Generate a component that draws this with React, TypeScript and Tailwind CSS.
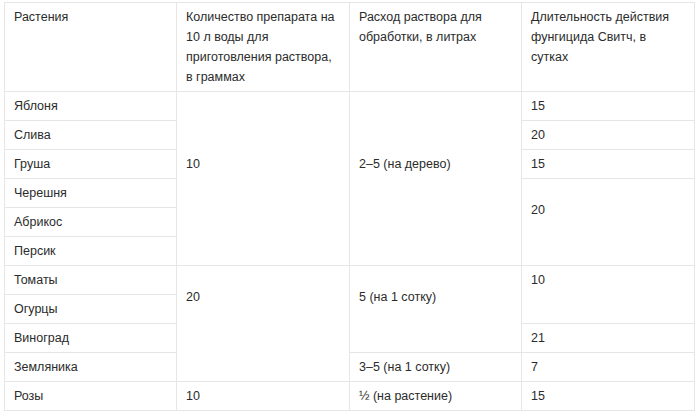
import React from "react"

type CellProps = {
  children?: React.ReactNode
  rowSpan?: number
  className?: string
}

function Td({ children, rowSpan, className = "" }: CellProps) {
  return (
    <td
      rowSpan={rowSpan}
      className={`border border-[#e6e6e6] px-[9px] py-1 align-top leading-5 ${className}`}
    >
      {children}
    </td>
  )
}

export default function App() {
  return (
    <div
      className="min-h-[418px] w-[700px] bg-white pl-[4px] pt-[2px] text-[12.5px] text-[#2b2b2b]"
      style={{ fontFamily: '"Liberation Sans", Arial, sans-serif' }}
    >
      <table className="w-[690px] table-fixed border-collapse">
        <colgroup>
          <col className="w-[172px]" />
          <col className="w-[173px]" />
          <col className="w-[172px]" />
          <col className="w-[173px]" />
        </colgroup>
        <tbody>
          <tr>
            <Td>Растения</Td>
            <Td>Количество препарата на 10 л воды для приготовления раствора, в граммах</Td>
            <Td>Расход раствора для обработки, в литрах</Td>
            <Td>Длительность действия фунгицида Свитч, в сутках</Td>
          </tr>
          <tr>
            <Td>Яблоня</Td>
            <Td rowSpan={6} className="pt-[62px]">10</Td>
            <Td rowSpan={6} className="pt-[62px]">2–5 (на дерево)</Td>
            <Td>15</Td>
          </tr>
          <tr>
            <Td>Слива</Td>
            <Td>20</Td>
          </tr>
          <tr>
            <Td>Груша</Td>
            <Td>15</Td>
          </tr>
          <tr>
            <Td>Черешня</Td>
            <Td rowSpan={3} className="pt-[21px]">20</Td>
          </tr>
          <tr>
            <Td>Абрикос</Td>
          </tr>
          <tr>
            <Td>Персик</Td>
          </tr>
          <tr>
            <Td>Томаты</Td>
            <Td rowSpan={4} className="pt-[21px]">20</Td>
            <Td rowSpan={3} className="pt-[21px]">5 (на 1 сотку)</Td>
            <Td rowSpan={2}>10</Td>
          </tr>
          <tr>
            <Td>Огурцы</Td>
          </tr>
          <tr>
            <Td>Виноград</Td>
            <Td>21</Td>
          </tr>
          <tr>
            <Td>Земляника</Td>
            <Td>3–5 (на 1 сотку)</Td>
            <Td>7</Td>
          </tr>
          <tr>
            <Td>Розы</Td>
            <Td>10</Td>
            <Td>½ (на растение)</Td>
            <Td>15</Td>
          </tr>
        </tbody>
      </table>
    </div>
  )
}
